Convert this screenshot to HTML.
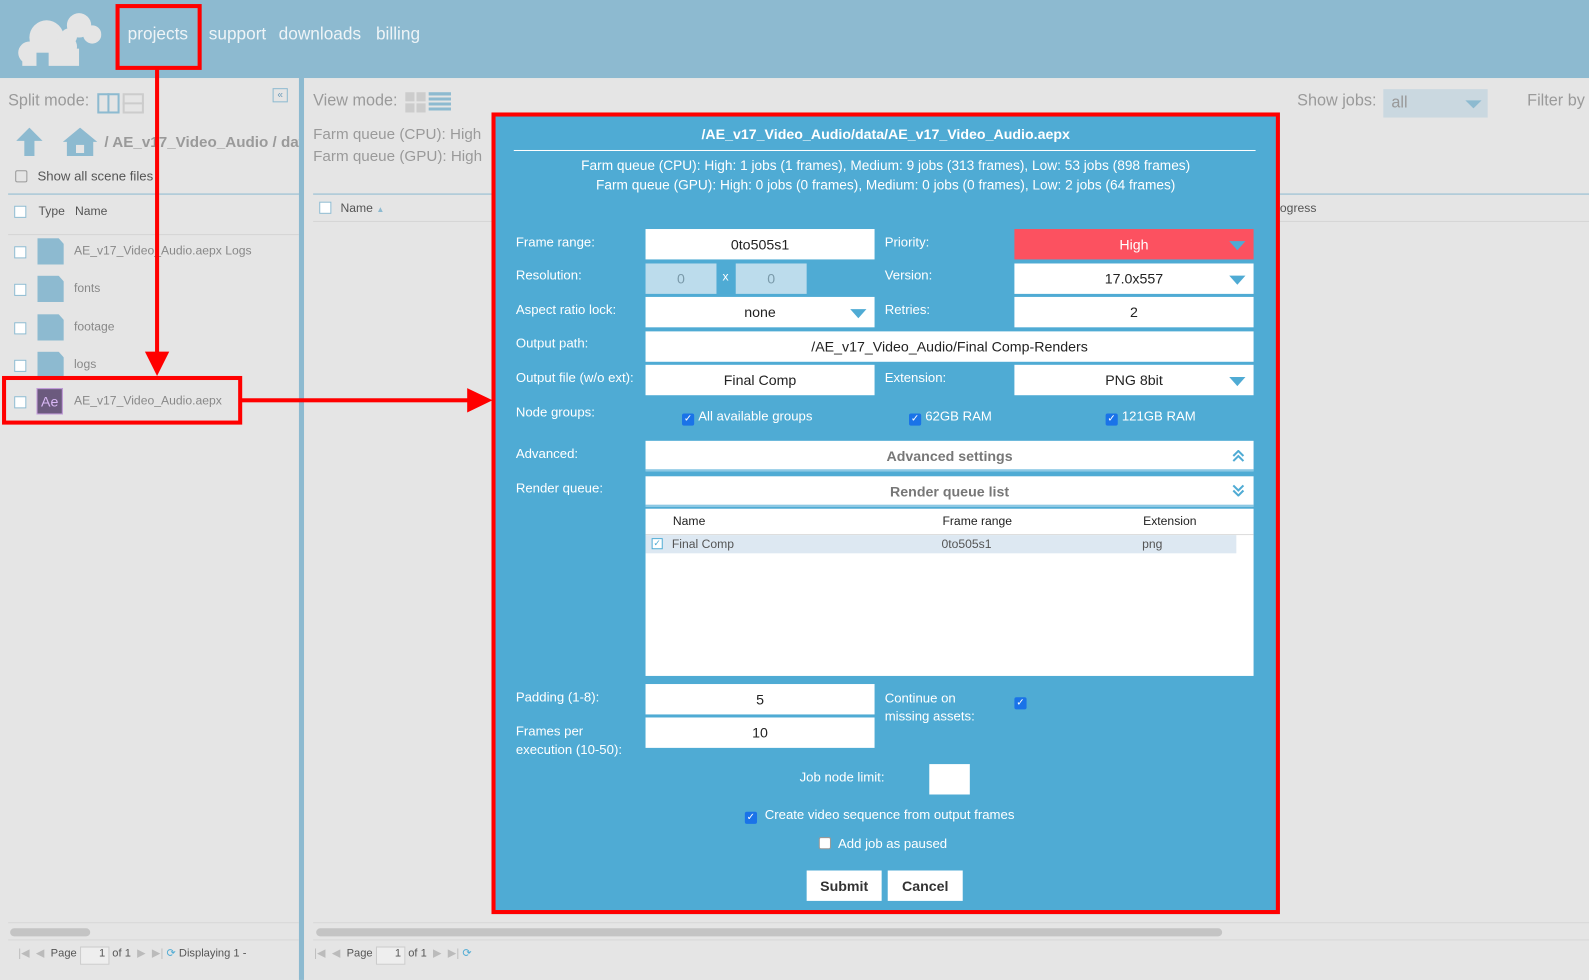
<!DOCTYPE html>
<html><head><meta charset="utf-8"><style>
*{margin:0;padding:0;box-sizing:border-box}
body{width:1589px;height:967px;overflow:hidden;background:#e5e5e5;font-family:"Liberation Sans",sans-serif;position:relative}
#w{position:absolute;left:0;top:0;width:1568px;height:954px;transform:scale(1.01339);transform-origin:0 0}
.a{position:absolute}
.hdr{left:0;top:0;width:1568px;height:77px;background:#8dbad0}
.nav{top:24px;color:#eef4f7;font-size:17px}
.g{color:#9a9a9a}
.lbl{color:#fff;font-size:13px}
.inp{background:#fff;font-size:14px;color:#222;text-align:center;line-height:30px;height:30px}
.tri{position:absolute;right:8px;top:12px;width:0;height:0;border-left:8px solid transparent;border-right:8px solid transparent;border-top:9px solid #4fabd4}
.cb{display:inline-block;width:12px;height:12px;background:#1a73e8;border-radius:2px;color:#fff;font-size:10px;line-height:12px;text-align:center;vertical-align:-1px;margin-right:4px}
.ecb{width:12px;height:12px;border:1px solid #8dbad0;background:#fff}
.file{width:26px;height:26px;background:#8dbad0;clip-path:polygon(0 0,80% 0,100% 22%,100% 100%,0 100%)}
.red{border:4px solid #f00}
</style></head><body><div id="w">
<div class="a hdr"></div>
<svg class="a" style="left:16px;top:8px" width="84" height="60" viewBox="0 0 84 60"><g fill="#e5e5e5"><circle cx="62" cy="17" r="12"/><circle cx="75" cy="26" r="9"/><circle cx="52" cy="28" r="8"/><circle cx="30" cy="29" r="17"/><circle cx="13" cy="44" r="11"/><circle cx="49" cy="38" r="11"/><rect x="6" y="40" width="56" height="17"/></g><rect x="20" y="44" width="12" height="16" fill="#8dbad0"/></svg>
<div class="a nav" style="left:126px">projects</div>
<div class="a nav" style="left:206px">support</div>
<div class="a nav" style="left:275px">downloads</div>
<div class="a nav" style="left:371px">billing</div>

<div class="a" style="left:295px;top:77px;width:5px;height:890px;background:#8dbad0"></div>
<div class="a g" style="left:8px;top:91px;font-size:16px">Split mode:</div>
<div class="a" style="left:96px;top:92px;width:22px;height:20px;border:2px solid #8dbad0"></div>
<div class="a" style="left:106px;top:92px;width:2px;height:20px;background:#8dbad0"></div>
<div class="a" style="left:121px;top:92px;width:21px;height:20px;border:2px solid #ccc"></div>
<div class="a" style="left:121px;top:101px;width:21px;height:2px;background:#ccc"></div>
<div class="a" style="left:269px;top:87px;width:15px;height:14px;border:1px solid #8dbad0;color:#6a9ab8;font-size:10px;line-height:12px;text-align:center">«</div>
<svg class="a" style="left:16px;top:126px" width="26" height="28"><polygon points="13,0 26,13 18,13 18,28 8,28 8,13 0,13" fill="#8dbad0"/></svg>
<svg class="a" style="left:62px;top:126px" width="34" height="28"><polygon points="17,0 34,14 30,14 30,28 4,28 4,14 0,14" fill="#8dbad0"/><rect x="13" y="17" width="8" height="8" fill="#e5e5e5"/></svg>
<div class="a g" style="left:103px;top:132px;font-size:15px;font-weight:bold;white-space:nowrap;width:192px;overflow:hidden">/ AE_v17_Video_Audio / data</div>
<div class="a" style="left:15px;top:168px;width:12px;height:12px;border:1px solid #999;border-radius:2px"></div>
<div class="a" style="left:37px;top:166px;font-size:13px;color:#555">Show all scene files</div>
<div class="a" style="left:8px;top:191px;width:287px;height:1px;background:#8dbad0"></div>
<div class="a ecb" style="left:14px;top:203px"></div>
<div class="a" style="left:38px;top:201px;font-size:12px;color:#555">Type&nbsp;&nbsp;&nbsp;Name</div>
<div class="a" style="left:8px;top:231px;width:287px;height:1px;background:#d5d5d5"></div>
<div class="a ecb" style="left:14px;top:243px"></div><div class="a file" style="left:37px;top:235px"></div><div class="a" style="left:73px;top:240px;font-size:12px;color:#888">AE_v17_Video_Audio.aepx Logs</div>
<div class="a ecb" style="left:14px;top:280px"></div><div class="a file" style="left:37px;top:272px"></div><div class="a" style="left:73px;top:277px;font-size:12px;color:#888">fonts</div>
<div class="a ecb" style="left:14px;top:318px"></div><div class="a file" style="left:37px;top:310px"></div><div class="a" style="left:73px;top:315px;font-size:12px;color:#888">footage</div>
<div class="a ecb" style="left:14px;top:355px"></div><div class="a file" style="left:37px;top:347px"></div><div class="a" style="left:73px;top:352px;font-size:12px;color:#888">logs</div>
<div class="a ecb" style="left:14px;top:391px"></div>
<div class="a" style="left:36px;top:383px;width:26px;height:26px;background:#6b5a7e;border:1px solid #c8a0e0;color:#d9b8f5;font-size:14px;line-height:24px;text-align:center">Ae</div>
<div class="a" style="left:73px;top:388px;font-size:12px;color:#888">AE_v17_Video_Audio.aepx</div>
<div class="a" style="left:8px;top:910px;width:287px;height:1px;background:#d8d8d8"></div>
<div class="a" style="left:10px;top:916px;width:79px;height:8px;border-radius:4px;background:#c4c4c4"></div>
<div class="a" style="left:8px;top:927px;width:287px;height:1px;background:#d8d8d8"></div>
<div class="a" style="left:18px;top:934px;font-size:11px;color:#555;white-space:nowrap"><span style="color:#bbb">|◀ &nbsp;◀ &nbsp;</span>Page <span style="display:inline-block;width:29px;height:18px;border:1px solid #ccc;background:#eee;text-align:right;padding-right:3px">1</span> of 1 <span style="color:#bbb">&nbsp;▶ &nbsp;▶|</span> <span style="color:#4fabd4">⟳</span> Displaying 1 -</div>
<div class="a" style="left:310px;top:934px;font-size:11px;color:#555;white-space:nowrap"><span style="color:#bbb">|◀ &nbsp;◀ &nbsp;</span>Page <span style="display:inline-block;width:29px;height:18px;border:1px solid #ccc;background:#eee;text-align:right;padding-right:3px">1</span> of 1 <span style="color:#bbb">&nbsp;▶ &nbsp;▶|</span> <span style="color:#4fabd4">⟳</span></div>

<div class="a g" style="left:309px;top:91px;font-size:16px">View mode:</div>
<div class="a" style="left:400px;top:91px;width:9px;height:9px;background:#ccc"></div><div class="a" style="left:411px;top:91px;width:9px;height:9px;background:#ccc"></div>
<div class="a" style="left:400px;top:102px;width:9px;height:9px;background:#ccc"></div><div class="a" style="left:411px;top:102px;width:9px;height:9px;background:#ccc"></div>
<div class="a" style="left:423px;top:91px;width:22px;height:20px;background:repeating-linear-gradient(#8dbad0 0 3px,transparent 3px 5px)"></div>
<div class="a g" style="left:309px;top:122px;font-size:15px;line-height:22px">Farm queue (CPU): High<br>Farm queue (GPU): High</div>
<div class="a g" style="left:1280px;top:91px;font-size:16px">Show jobs:</div>
<div class="a" style="left:1365px;top:88px;width:103px;height:28px;background:#cad8e0;color:#999;font-size:16px;padding:5px 8px">all</div>
<div class="a" style="left:1446px;top:99px;border-left:8px solid transparent;border-right:8px solid transparent;border-top:8px solid #8dbad0"></div>
<div class="a g" style="left:1507px;top:91px;font-size:16px">Filter by</div>
<div class="a" style="left:309px;top:191px;width:1280px;height:1px;background:#8dbad0"></div>
<div class="a ecb" style="left:315px;top:199px"></div>
<div class="a" style="left:336px;top:198px;font-size:12px;color:#555">Name <span style="color:#8dbad0;font-size:8px">▲</span></div>
<div class="a" style="left:1263px;top:198px;font-size:12px;color:#555">ogress</div>
<div class="a" style="left:309px;top:218px;width:1280px;height:1px;background:#d5d5d5"></div>
<div class="a" style="left:309px;top:910px;width:1280px;height:1px;background:#d8d8d8"></div>
<div class="a" style="left:312px;top:916px;width:894px;height:8px;border-radius:4px;background:#c4c4c4"></div>
<div class="a" style="left:309px;top:927px;width:1280px;height:1px;background:#d8d8d8"></div>

<div class="a red" style="left:485px;top:111px;width:778px;height:791px;background:#4fabd4"></div>
<div class="a" style="left:489px;top:124px;width:770px;text-align:center;color:#fff;font-weight:bold;font-size:14px">/AE_v17_Video_Audio/data/AE_v17_Video_Audio.aepx</div>
<div class="a" style="left:507px;top:148px;width:732px;height:1px;background:#fff"></div>
<div class="a" style="left:489px;top:154px;width:770px;text-align:center;color:#fff;font-size:13.5px;line-height:19px">Farm queue (CPU): High: 1 jobs (1 frames), Medium: 9 jobs (313 frames), Low: 53 jobs (898 frames)<br>Farm queue (GPU): High: 0 jobs (0 frames), Medium: 0 jobs (0 frames), Low: 2 jobs (64 frames)</div>

<div class="a lbl" style="left:509px;top:231px">Frame range:</div>
<div class="a inp" style="left:637px;top:226px;width:226px">0to505s1</div>
<div class="a lbl" style="left:873px;top:231px">Priority:</div>
<div class="a inp" style="left:1001px;top:226px;width:236px;background:#fc5160;color:#fff">High<div class="tri"></div></div>

<div class="a lbl" style="left:509px;top:264px">Resolution:</div>
<div class="a inp" style="left:637px;top:260px;width:70px;background:#bcdcec;color:#7a9aaa">0</div>
<div class="a lbl" style="left:713px;top:266px;font-size:12px">x</div>
<div class="a inp" style="left:726px;top:260px;width:70px;background:#bcdcec;color:#7a9aaa">0</div>
<div class="a lbl" style="left:873px;top:264px">Version:</div>
<div class="a inp" style="left:1001px;top:260px;width:236px">17.0x557<div class="tri"></div></div>

<div class="a lbl" style="left:509px;top:298px">Aspect ratio lock:</div>
<div class="a inp" style="left:637px;top:293px;width:226px">none<div class="tri"></div></div>
<div class="a lbl" style="left:873px;top:298px">Retries:</div>
<div class="a inp" style="left:1001px;top:293px;width:236px">2</div>

<div class="a lbl" style="left:509px;top:331px">Output path:</div>
<div class="a inp" style="left:637px;top:327px;width:600px">/AE_v17_Video_Audio/Final Comp-Renders</div>

<div class="a lbl" style="left:509px;top:365px">Output file (w/o ext):</div>
<div class="a inp" style="left:637px;top:360px;width:226px">Final Comp</div>
<div class="a lbl" style="left:873px;top:365px">Extension:</div>
<div class="a inp" style="left:1001px;top:360px;width:236px">PNG 8bit<div class="tri"></div></div>

<div class="a lbl" style="left:509px;top:399px">Node groups:</div>
<div class="a lbl" style="left:673px;top:403px"><span class="cb">✓</span>All available groups</div>
<div class="a lbl" style="left:897px;top:403px"><span class="cb">✓</span>62GB RAM</div>
<div class="a lbl" style="left:1091px;top:403px"><span class="cb">✓</span>121GB RAM</div>

<div class="a lbl" style="left:509px;top:440px">Advanced:</div>
<div class="a" style="left:637px;top:435px;width:600px;height:30px;background:#fff;border-bottom:2px solid #8cc8e4;text-align:center;line-height:30px;font-weight:bold;color:#777;font-size:14px">Advanced settings<svg style="position:absolute;right:9px;top:9px" width="12" height="12"><path d="M1 6 L6 1 L11 6 M1 11 L6 6 L11 11" stroke="#4fabd4" stroke-width="2" fill="none"/></svg></div>
<div class="a lbl" style="left:509px;top:474px">Render queue:</div>
<div class="a" style="left:637px;top:470px;width:600px;height:30px;background:#fff;border-bottom:2px solid #8cc8e4;text-align:center;line-height:30px;font-weight:bold;color:#777;font-size:14px">Render queue list<svg style="position:absolute;right:9px;top:8px" width="12" height="12"><path d="M1 1 L6 6 L11 1 M1 6 L6 11 L11 6" stroke="#4fabd4" stroke-width="2" fill="none"/></svg></div>
<div class="a" style="left:637px;top:502px;width:600px;height:165px;background:#fff"></div>
<div class="a" style="left:637px;top:527px;width:600px;height:1px;background:#ddd"></div>
<div class="a" style="left:664px;top:507px;font-size:12px;color:#222">Name</div>
<div class="a" style="left:930px;top:507px;font-size:12px;color:#222">Frame range</div>
<div class="a" style="left:1128px;top:507px;font-size:12px;color:#222">Extension</div>
<div class="a" style="left:637px;top:528px;width:583px;height:18px;background:#dde8f2"></div>
<div class="a" style="left:643px;top:531px;width:11px;height:11px;border:1px solid #4fabd4;background:#fff;color:#4fabd4;font-size:9px;line-height:9px;text-align:center">✓</div>
<div class="a" style="left:663px;top:530px;font-size:12px;color:#555">Final Comp</div>
<div class="a" style="left:929px;top:530px;font-size:12px;color:#555">0to505s1</div>
<div class="a" style="left:1127px;top:530px;font-size:12px;color:#555">png</div>

<div class="a lbl" style="left:509px;top:680px">Padding (1-8):</div>
<div class="a inp" style="left:637px;top:675px;width:226px">5</div>
<div class="a lbl" style="left:873px;top:680px;line-height:18px">Continue on<br>missing assets:</div>
<div class="a" style="left:1001px;top:682px"><span class="cb">✓</span></div>
<div class="a lbl" style="left:509px;top:713px;line-height:18px">Frames per<br>execution (10-50):</div>
<div class="a inp" style="left:637px;top:708px;width:226px">10</div>

<div class="a lbl" style="left:789px;top:759px">Job node limit:</div>
<div class="a" style="left:917px;top:754px;width:40px;height:30px;background:#fff"></div>
<div class="a lbl" style="left:735px;top:796px"><span class="cb">✓</span> Create video sequence from output frames</div>
<div class="a lbl" style="left:808px;top:825px"><span class="cb" style="background:#fff;border:1px solid #999"></span> Add job as paused</div>
<div class="a" style="left:796px;top:859px;width:74px;height:30px;background:#fff;text-align:center;line-height:30px;font-weight:bold;font-size:14px;color:#333">Submit</div>
<div class="a" style="left:876px;top:859px;width:74px;height:30px;background:#fff;text-align:center;line-height:30px;font-weight:bold;font-size:14px;color:#333">Cancel</div>

<div class="a red" style="left:114px;top:4px;width:85px;height:65px"></div>
<div class="a" style="left:153px;top:68px;width:4px;height:282px;background:#f00"></div>
<div class="a" style="left:143px;top:347px;border-left:12px solid transparent;border-right:12px solid transparent;border-top:24px solid #f00"></div>
<div class="a red" style="left:2px;top:371px;width:237px;height:48px"></div>
<div class="a" style="left:238px;top:393px;width:225px;height:4px;background:#f00"></div>
<div class="a" style="left:461px;top:383px;border-top:12px solid transparent;border-bottom:12px solid transparent;border-left:25px solid #f00"></div>
</div></body></html>
